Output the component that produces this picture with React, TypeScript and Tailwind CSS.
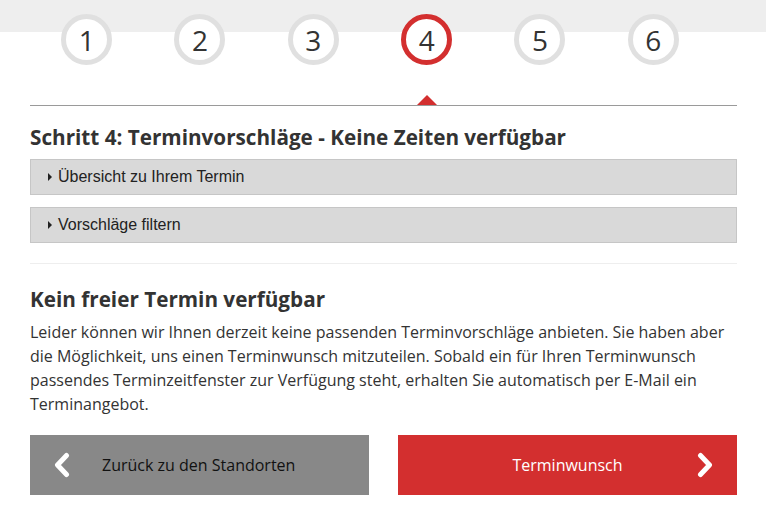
const steps = [1, 2, 3, 4, 5, 6];
const active = 4;

function Accordion({ label }: { label: string }) {
  return (
    <div className="flex h-[36px] items-center border border-[#c6c6c6] bg-[#d9d9d9] pl-[17px] font-['Liberation_Sans',Arial,sans-serif] text-[16px] text-[#222]">
      <span className="mr-[6px] inline-block h-0 w-0 border-y-[4px] border-l-[4px] border-y-transparent border-l-[#222]" />
      {label}
    </div>
  );
}

function Chevron({ dir }: { dir: "left" | "right" }) {
  return (
    <svg width="18" height="26" viewBox="0 0 18 26" className="shrink-0">
      <polyline
        points={dir === "left" ? "13.5,3.5 4.5,13 13.5,22.5" : "4.5,3.5 13.5,13 4.5,22.5"}
        fill="none"
        stroke="#fff"
        strokeWidth="5"
        strokeLinecap="round"
        strokeLinejoin="round"
      />
    </svg>
  );
}

export default function App() {
  return (
    <div className="min-h-[526px] bg-[linear-gradient(to_bottom,#eeeeee_32px,#ffffff_32px)] font-['Open_Sans',sans-serif] text-[#333]">
      <div className="pl-[30px] pr-[29px]">
        <div className="grid w-[680px] grid-cols-6 justify-items-center pt-[14px]">
          {steps.map((n) => (
            <div
              key={n}
              className={
                "flex h-[51px] w-[51px] items-center justify-center rounded-full border-[5px] bg-white text-[28px] leading-none text-[#333] " +
                (n === active ? "border-[#d32f2f]" : "border-[#e0e0e0]")
              }
            >
              {n}
            </div>
          ))}
          {steps.map((n) => (
            <div key={"t" + n} className="flex h-[40px] items-end">
              {n === active && (
                <span className="block h-0 w-0 border-x-[10px] border-b-[10px] border-x-transparent border-b-[#d32f2f]" />
              )}
            </div>
          ))}
        </div>
        <div className="h-[1px] bg-[#9a9a9a]" />

        <h1 className="mt-[17px] text-[20.7px] font-bold leading-[28px]">
          Schritt 4: Terminvorschläge - Keine Zeiten verfügbar
        </h1>

        <div className="mt-[8px] flex flex-col gap-[12px]">
          <Accordion label="Übersicht zu Ihrem Termin" />
          <Accordion label="Vorschläge filtern" />
        </div>

        <div className="mt-[20px] h-[1px] bg-[#eeeeee]" />

        <h2 className="mt-[21px] text-[20.7px] font-bold leading-[28px]">
          Kein freier Termin verfügbar
        </h2>
        <p className="mt-[7px] text-[16px] leading-[24px]">
          Leider können wir Ihnen derzeit keine passenden Terminvorschläge anbieten. Sie haben aber die
          Möglichkeit, uns einen Terminwunsch mitzuteilen. Sobald ein für Ihren Terminwunsch passendes
          Terminzeitfenster zur Verfügung steht, erhalten Sie automatisch per E-Mail ein Terminangebot.
        </p>

        <div className="mt-[19px] flex gap-[29px]">
          <button className="flex h-[60px] flex-1 items-center bg-[#888888] text-[16px] text-[#111]">
            <span className="ml-[23px]">
              <Chevron dir="left" />
            </span>
            <span className="ml-[31px]">Zurück zu den Standorten</span>
          </button>
          <button className="relative flex h-[60px] flex-1 items-center justify-center bg-[#d32f2f] text-[16px] text-white">
            <span>Terminwunsch</span>
            <span className="absolute right-[23px] top-[17px]">
              <Chevron dir="right" />
            </span>
          </button>
        </div>
      </div>
    </div>
  );
}
